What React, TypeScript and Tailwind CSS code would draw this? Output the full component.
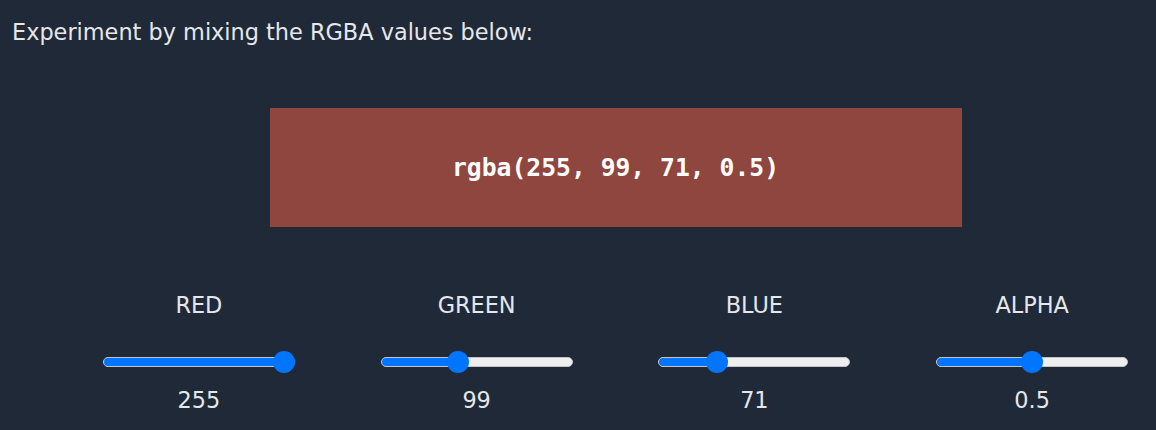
const channels = [
  { label: 'RED', value: 255, min: 0, max: 255, text: '255' },
  { label: 'GREEN', value: 99, min: 0, max: 255, text: '99' },
  { label: 'BLUE', value: 71, min: 0, max: 255, text: '71' },
  { label: 'ALPHA', value: 0.5, min: 0, max: 1, text: '0.5' },
];

function Slider({ value, min, max }: { value: number; min: number; max: number }) {
  const pct = (value - min) / (max - min);
  // thumb travels between 11px and width-11px
  const left = `calc(11px + ${pct} * (100% - 22px))`;
  return (
    <div className="relative w-[192px] h-[22px] flex items-center">
      <div className="w-full h-[10px] rounded-full bg-[#efefef] border border-[#c4c4c4] overflow-hidden relative">
        <div className="absolute inset-y-0 left-0 bg-[#0075ff]" style={{ width: left }} />
      </div>
      <div
        className="absolute top-0 w-[22px] h-[22px] -ml-[11px] rounded-full bg-[#0075ff]"
        style={{ left }}
      />
    </div>
  );
}

export default function App() {
  return (
    <div className="h-[430px] w-[1156px] overflow-hidden bg-[#1f2937] text-[#e5e7eb] font-['DejaVu_Sans',sans-serif]">
      <p className="pt-[17px] pl-[12px] text-[22.4px] leading-[30px]">Experiment by mixing the RGBA values below:</p>

      <div className="ml-[60px] w-[1111px]">
        <div className="mx-auto mt-[61px] w-[692px] h-[119px] bg-[rgba(255,99,71,0.5)] flex items-center justify-center">
          <span className="font-['DejaVu_Sans_Mono',monospace] font-bold text-[24.7px] text-white">
            rgba(255, 99, 71, 0.5)
          </span>
        </div>

        <div className="grid grid-cols-4 mt-[63px]">
          {channels.map((c) => (
            <div key={c.label} className="flex flex-col items-center">
              <div className="text-[22.4px] leading-[30px]">{c.label}</div>
              <div className="mt-[31px]">
                <Slider value={c.value} min={c.min} max={c.max} />
              </div>
              <div className="mt-[12px] text-[22.4px] leading-[30px]">{c.text}</div>
            </div>
          ))}
        </div>
      </div>
    </div>
  );
}
